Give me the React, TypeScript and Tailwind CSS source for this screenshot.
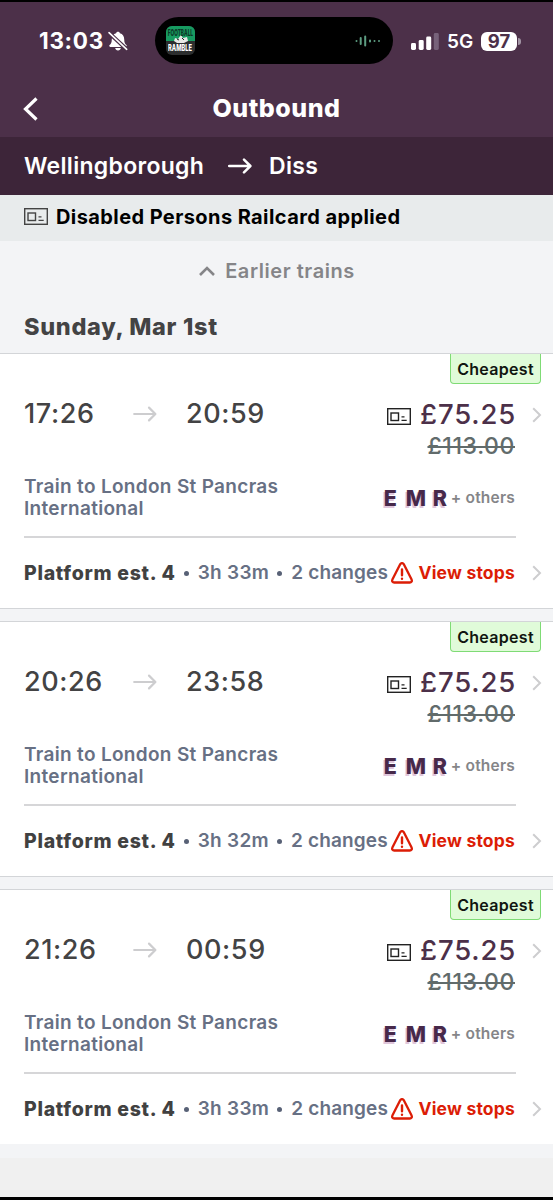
import React from "react";

function RailcardIcon({ className }: { className: string }) {
  return (
    <svg viewBox="0 0 24 17" width="24" height="17" fill="none" stroke="currentColor" className={className}>
      <rect x="0.7" y="0.7" width="22.6" height="15.6" strokeWidth="1.4" />
      <rect x="4" y="5" width="7.5" height="7.5" strokeWidth="1.4" />
      <path d="M14.5 8.8h3M14.5 12.4h5.2" strokeWidth="1.3" />
    </svg>
  );
}

function Arrow({ className, sw }: { className: string; sw: number }) {
  return (
    <svg viewBox="0 0 24 16" width="24" height="16" fill="none" stroke="currentColor" strokeWidth={sw} strokeLinecap="round" strokeLinejoin="round" className={className}>
      <path d="M1.2 8h21M16 1.6L22.4 8l-6.4 6.4" />
    </svg>
  );
}

function Chevron() {
  return (
    <svg viewBox="0 0 10 16" width="10" height="16" fill="none" stroke="#cdcdcf" strokeWidth="2" className="shrink-0">
      <path d="M1.2 1.2L8 8l-6.8 6.8" />
    </svg>
  );
}

function Warning() {
  return (
    <svg viewBox="0 0 22 22" width="22" height="22" fill="none" stroke="#dc1d06" strokeLinecap="round" strokeLinejoin="round" className="shrink-0">
      <path d="M9.3 2.1L1.4 17.6c-.7 1.6.2 2.9 1.8 2.9h15.6c1.6 0 2.5-1.3 1.800-2.900L12.700 2.100c-.8-1.300-2.600-1.300-3.400 0z" strokeWidth="2.300" />
      <path d="M11 7.500v5.700M11 16.600v.2" strokeWidth="2.400" />
    </svg>
  );
}

function StatusBar() {
  return (
    <div className="flex h-[78px] items-start">
      <div className="flex h-[78px] w-[155px] items-center pl-[39px]">
        <span className="w-[64px] text-[22.5px] font-bold tracking-[0.7px] text-white">13:03</span>
        <svg viewBox="0 0 20 20" width="20" height="20" className="ml-[5px] shrink-0">
          <path d="M10 .8c.9 0 1.700.6 1.900 1.400 2.900.8 4.300 3.100 4.300 6 0 3.500.9 4.700 2.200 5.900.7.700.4 1.800-.7 1.800H2.300c-1.100 0-1.400-1.100-.7-1.800C2.900 12.900 3.800 11.700 3.800 8.200c0-2.900 1.400-5.200 4.300-6C8.300 1.400 9.100.8 10 .8zM7.200 17h5.600c-.2 1.500-1.300 2.500-2.800 2.500S7.400 18.500 7.200 17z" fill="#fff" />
          <path d="M.5 1.500l18.500 17" stroke="#4c3049" strokeWidth="4" />
          <path d="M1 1.700l17.700 16.600" stroke="#fff" strokeWidth="1.600" strokeLinecap="round" />
        </svg>
      </div>
      <div className="mt-[15px] flex h-[47px] w-[238px] items-center justify-between rounded-full bg-black pr-[12px] pl-[11px]">
        <div className="flex h-[29px] w-[29px] flex-col items-center overflow-hidden rounded-[6px] bg-[#2c2e2f]">
          <div className="flex h-[15px] w-full shrink-0 justify-center bg-[#179b61]">
            <span className="scale-x-[0.5] text-[9.5px] leading-[14px] font-extrabold text-[#0c3826]">FOOTBALL</span>
          </div>
          <svg viewBox="0 0 16 8" width="16" height="8" className="-mt-[6px] shrink-0">
            <path d="M1 6l1-3 3 1 3-4 2 3 4-1 1 4-4 2H4z" fill="#e7e8e6" />
            <path d="M4 4l2 1M9 3l2 2" stroke="#222" />
          </svg>
          <span className="scale-x-[0.6] text-[9.5px] leading-[10px] font-extrabold text-white">RAMBLE</span>
        </div>
        <svg viewBox="0 0 26 12" width="26" height="12" stroke="#5d9d82" strokeLinecap="round" strokeWidth="2">
          <path d="M1.500 6v.1M5.700 3v6M10.200 1.500v9M15 5.600v.9M19.500 6v.1M24 6v.1" />
        </svg>
      </div>
      <div className="flex h-[78px] items-center pl-[18px]">
        <svg viewBox="0 0 28 18" width="28" height="18" fill="#fff">
          <rect x="0" y="11" width="5" height="7" rx="1.400" />
          <rect x="7.700" y="8" width="5" height="10" rx="1.400" />
          <rect x="15.200" y="4.500" width="5" height="13.500" rx="1.400" />
          <rect x="22.800" y="1" width="5" height="17" rx="1.400" fill="#77627a" />
        </svg>
        <span className="ml-[8px] w-[34px] pt-[2px] text-[19px] font-semibold text-white">5G</span>
        <div className="flex h-[19px] w-[36px] items-center justify-center rounded-[6px] bg-white text-[18.5px] leading-[19px] font-bold text-[#4c3049]">97</div>
        <div className="ml-[1px] h-[7px] w-[2.5px] rounded-r-full bg-[#a294a4]" />
      </div>
    </div>
  );
}

type Journey = { depart: string; arrive: string; duration: string };

const journeys: Journey[] = [
  { depart: "17:26", arrive: "20:59", duration: "3h 33m" },
  { depart: "20:26", arrive: "23:58", duration: "3h 32m" },
  { depart: "21:26", arrive: "00:59", duration: "3h 33m" },
];

function JourneyCard({ depart, arrive, duration }: Journey) {
  return (
    <article className="relative h-[254px] bg-white">
      <div className="absolute top-0 right-[12px] flex h-[30px] w-[91px] items-center justify-center rounded-b-[4px] border border-t-0 border-[#7fdb75] bg-[#e0fbd9] text-[16px] font-semibold tracking-[0.3px] text-[#101510]">
        Cheapest
      </div>
      <div className="flex h-[182px] pl-6">
        <div className="flex-1 pt-[43px]">
          <div className="flex h-[34px] items-center text-[27px] font-medium tracking-[0.6px] text-[#434344]">
            <span className="w-[109px]">{depart}</span>
            <span className="w-[53px]"><Arrow className="text-[#cdcdcf]" sw={2.2} /></span>
            <span>{arrive}</span>
          </div>
          <p className="mt-[45px] text-[19px] leading-[22px] font-semibold tracking-[0.32px] text-[#677084]">
            Train to London St Pancras<br />International
          </p>
        </div>
        <div className="flex flex-col items-end pt-[43px]">
          <div className="flex h-[34px] items-center">
            <RailcardIcon className="mt-[4px] mr-[9px] text-[#222]" />
            <span className="-mr-[1px] pt-[1px] text-[27.5px] font-medium tracking-[0.8px] text-[#4c3049]">£75.25</span>
          </div>
          <span className="h-[28px] text-[23px] leading-[30px] font-medium tracking-[0.6px] text-[#616b6b] line-through decoration-[2px]">£113.00</span>
          <div className="mt-[27px] flex h-[24px] items-center">
            <div className="flex text-[21.5px] font-extrabold text-[#47294a] [text-shadow:-1.5px_1.5px_0_#dfc6db]">
              <span className="w-[22px]">E</span>
              <span className="w-[27px]">M</span>
              <span className="w-[18px]">R</span>
            </div>
            <span className="text-[15.5px] font-semibold tracking-[0.2px] text-[#858588]">+ others</span>
          </div>
        </div>
        <div className="flex w-[38px] justify-center pt-[53px] pl-[5px]"><Chevron /></div>
      </div>
      <div className="ml-6 h-[2px] w-[492px] bg-[#d6d6d8]" />
      <div className="flex h-[70px] items-center pl-6 text-[19px] font-semibold whitespace-nowrap text-[#677084]">
        <span className="pt-[1px] text-[19.5px] font-extrabold tracking-[0.72px] text-[#414141]">Platform est. 4</span>
        <span className="mr-[9px] ml-[8px] h-[5px] w-[5px] rounded-full bg-[#586176]" />
        <span className="pt-[1px] tracking-[0.3px]">{duration}</span>
        <span className="mr-[9px] ml-[8px] h-[5px] w-[5px] rounded-full bg-[#586176]" />
        <span className="pt-[1px] tracking-[0.15px]">2 changes</span>
        <span className="ml-auto flex items-center gap-[5px] text-[17.5px] font-bold tracking-[0.2px] text-[#dc1d06]">
          <Warning />View stops
        </span>
        <span className="flex w-[38px] justify-center pl-[5px]"><Chevron /></span>
      </div>
    </article>
  );
}

export default function App() {
  return (
    <div className="flex h-[1200px] w-[553px] flex-col overflow-hidden bg-[#f3f4f6] font-['Inter','Liberation_Sans',sans-serif]">
      <div className="h-[2px] shrink-0 bg-black" />
      <header className="h-[135px] shrink-0 bg-[#4c3049]">
        <StatusBar />
        <div className="flex h-[57px] items-center">
          <svg viewBox="0 0 16 24" width="16" height="24" fill="none" stroke="#fff" strokeWidth="3.2" className="ml-[23px]">
            <path d="M13.5 1.5L2.5 12l11 10.5" />
          </svg>
          <h1 className="flex-1 pr-[39px] text-center text-[25px] font-extrabold tracking-[0.5px] text-white">Outbound</h1>
        </div>
      </header>
      <div className="flex h-[58px] shrink-0 items-center bg-[#3d2539] pl-6 text-[23px] font-semibold tracking-[0.3px] text-white">
        <span className="w-[204px]">Wellingborough</span>
        <Arrow className="mr-[17px] text-white" sw={2.5} />
        <span>Diss</span>
      </div>
      <div className="flex h-[46px] shrink-0 items-center bg-[#e8ebec] pb-[3px] pl-6 text-[20px] font-bold tracking-[0.41px] text-black">
        <RailcardIcon className="mr-[8px] text-[#444]" />
        Disabled Persons Railcard applied
      </div>
      <div className="flex h-[60px] shrink-0 items-center justify-center text-[20px] font-semibold tracking-[0.55px] text-[#858588]">
        <svg viewBox="0 0 18 12" width="18" height="12" fill="none" stroke="currentColor" strokeWidth="2.6" className="mr-[9px]">
          <path d="M2 10l7-7 7 7" />
        </svg>
        Earlier trains
      </div>
      <h2 className="h-[52px] shrink-0 pl-6 text-[23.5px] leading-[52px] font-extrabold tracking-[0.68px] text-[#434344]">Sunday, Mar 1st</h2>
      <main className="flex shrink-0 flex-col gap-[12px]">
        {journeys.map((j) => (
          <div key={j.depart} className="border-y border-[#d3d5d8] last:border-b-0">
            <JourneyCard {...j} />
          </div>
        ))}
      </main>
      <div className="mt-[14px] flex-1 bg-[#f0f0f0]" />
      <div className="h-[3px] shrink-0 bg-black" />
    </div>
  );
}
